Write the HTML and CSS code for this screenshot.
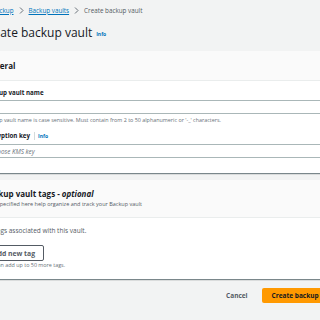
FILE: index.html
```html
<!DOCTYPE html>
<html>
<head>
<meta charset="utf-8">
<link rel="stylesheet" href="styles.css">
</head>
<body>
<div class="page">
  <nav class="crumbs">
    <a class="crumb-link" href="#">AWS Backup</a>
    <svg class="chev" width="5" height="7" viewBox="0 0 5 7"><path d="M1 0.5 L4 3.5 L1 6.5" fill="none" stroke="#687078" stroke-width="1"/></svg>
    <a class="crumb-link" href="#">Backup vaults</a>
    <svg class="chev" width="5" height="7" viewBox="0 0 5 7"><path d="M1 0.5 L4 3.5 L1 6.5" fill="none" stroke="#687078" stroke-width="1"/></svg>
    <span class="crumb-cur">Create backup vault</span>
  </nav>
  <h1 class="title">Create backup vault <a class="info info-title" href="#">Info</a></h1>

  <section class="panel">
    <header class="panel-head">
      <h2 class="panel-title">General</h2>
    </header>
    <div class="panel-body">
      <div class="label">Backup vault name</div>
      <div class="input"></div>
      <p class="hint">Backup vault name is case sensitive. Must contain from 2 to 50 alphanumeric or '-_' characters.</p>
      <div class="label label-2">Encryption key <span class="divider"></span><a class="info" href="#">Info</a></div>
      <div class="input input-2"><span class="placeholder">Choose KMS key</span></div>
    </div>
  </section>

  <section class="panel panel-2">
    <header class="panel-head head-2">
      <h2 class="panel-title t2">Backup vault tags - <i>optional</i></h2>
      <p class="panel-desc">Tags specified here help organize and track your Backup vault</p>
    </header>
    <div class="panel-body body-2">
      <p class="text">No tags associated with this vault.</p>
      <button class="btn">Add new tag</button>
      <p class="hint hint-2">You can add up to 50 more tags.</p>
    </div>
  </section>

  <footer class="actions">
    <button class="cancel">Cancel</button>
    <button class="primary">Create backup vault</button>
  </footer>
</div>
</body>
</html>
```

FILE: styles.css
```css
* { box-sizing: border-box; }
html, body { margin: 0; padding: 0; }
body {
  background: #f2f3f3;
  font-family: "Open Sans", "Noto Sans", sans-serif;
  color: #16191f;
  overflow: hidden;
  width: 320px;
  height: 320px;
}
.page {
  margin-left: -30px;
  width: 377px;
}
.crumbs {
  display: flex;
  align-items: center;
  height: 20px;
  padding-left: 7px;
  font-size: 6.3px;
  gap: 5px;
}
.crumb-link { color: #0073bb; text-decoration: underline; }
.crumb-cur { color: #545b64; }
.chev { display: block; }
.title {
  margin: 0;
  padding-left: 11px;
  height: 26px;
  line-height: 26px;
  font-size: 12px;
  font-weight: 400;
  display: flex;
  align-items: center;
  gap: 4px;
}
.info {
  color: #0073bb;
  font-weight: 700;
  font-size: 5px;
  text-decoration: none;
}
.info-title { padding-top: 2px; }
.panel {
  margin-top: 5px;
  background: #fff;
  box-shadow: 0 1px 1px 0 rgba(0,28,36,.3), 1px 1px 1px 0 rgba(0,28,36,.15), -1px 1px 1px 0 rgba(0,28,36,.15);
}
.panel-2 { margin-top: 7px; }
.panel-head {
  background: #fafafa;
  border-bottom: 1px solid #eaeded;
  height: 30px;
  padding-left: 14px;
  display: flex;
  flex-direction: column;
  justify-content: center;
}
.head-2 { height: 38px; }
.panel-title {
  margin: 0;
  font-size: 8px;
  font-weight: 700;
  line-height: 12px;
}
.panel-title i { font-weight: 700; }
.panel-desc {
  margin: 0;
  font-size: 5.5px;
  line-height: 9px;
  color: #545b64;
}
.panel-body {
  padding: 6px 0 15px 14px;
}
.body-2 { padding: 8px 0 10px 14px; }
.label {
  font-size: 6.2px;
  font-weight: 700;
  line-height: 12px;
  height: 12px;
  display: flex;
  align-items: center;
}
.label-2 { margin-top: 5px; }
.divider {
  display: inline-block;
  width: 1px;
  height: 8px;
  background: #d5dbdb;
  margin: 0 3px 0 4px;
}
.input {
  margin-top: 1px;
  height: 14px;
  border: 1px solid #aab7b8;
  border-radius: 2px;
  background: #fff;
  display: flex;
  align-items: center;
  padding-left: 5px;
}
.input-2 { margin-top: 2px; }
.placeholder {
  font-size: 6.3px;
  font-style: italic;
  color: #687078;
}
.hint {
  margin: 1px 0 0;
  font-size: 5.4px;
  line-height: 10px;
  color: #687078;
}
.text {
  margin: 0;
  font-size: 6.5px;
  line-height: 10px;
  color: #545b64;
}
.btn {
  margin-top: 9px;
  display: block;
  height: 16px;
  padding: 0 8px;
  font-family: inherit;
  font-size: 6.8px;
  font-weight: 700;
  color: #545b64;
  background: #fff;
  border: 1px solid #545b64;
  border-radius: 2px;
}
.hint-2 {
  margin: 0;
  line-height: 8px;
}
.actions {
  margin-top: 9px;
  display: flex;
  justify-content: flex-end;
  align-items: center;
  gap: 4px;
}
.cancel {
  font-family: inherit;
  font-size: 6.5px;
  font-weight: 700;
  color: #545b64;
  background: none;
  border: none;
  padding: 0 10px;
  height: 15px;
}
.primary {
  font-family: inherit;
  font-size: 6.5px;
  font-weight: 700;
  color: #16191f;
  background: #ff9900;
  border: none;
  border-radius: 2px;
  height: 15px;
  padding: 0 10px;
}
```
